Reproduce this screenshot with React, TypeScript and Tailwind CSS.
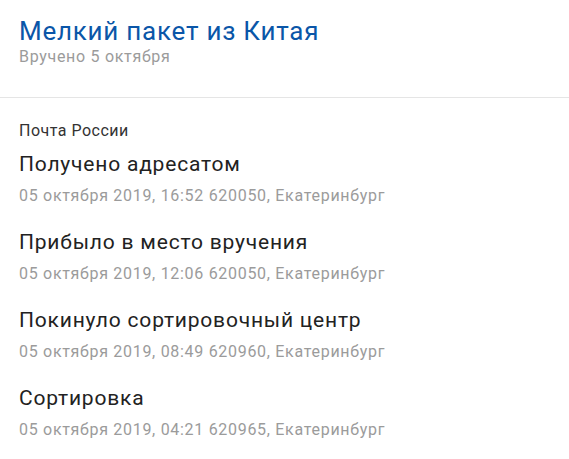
const events = [
  { title: "Получено адресатом", info: "05 октября 2019, 16:52 620050, Екатеринбург" },
  { title: "Прибыло в место вручения", info: "05 октября 2019, 12:06 620050, Екатеринбург" },
  { title: "Покинуло сортировочный центр", info: "05 октября 2019, 08:49 620960, Екатеринбург" },
  { title: "Сортировка", info: "05 октября 2019, 04:21 620965, Екатеринбург" },
];

export default function App() {
  return (
    <div className="min-h-screen bg-white font-['Roboto',sans-serif]">
      <div className="border-b border-[#e5e5e5] px-[19px] pt-[15px] pb-[30px]">
        <h1 className="text-[26px] leading-[32px] tracking-[0.75px] text-[#0a56a8]">Мелкий пакет из Китая</h1>
        <p className="text-[16px] leading-[20px] tracking-[0.7px] text-[#9b9b9b]">Вручено 5 октября</p>
      </div>
      <div className="px-[19px] pt-[23px]">
        <p className="mb-[7px] text-[16px] leading-[20px] tracking-[0.5px] text-[#333]">Почта России</p>
        <ul>
          {events.map((e) => (
            <li key={e.title} className="pb-[18px]">
              <div className="text-[21px] leading-[32px] tracking-[0.8px] text-[#222]">{e.title}</div>
              <div className="mt-[4px] text-[16px] leading-[24px] tracking-[0.7px] text-[#9b9b9b]">{e.info}</div>
            </li>
          ))}
        </ul>
      </div>
    </div>
  );
}
